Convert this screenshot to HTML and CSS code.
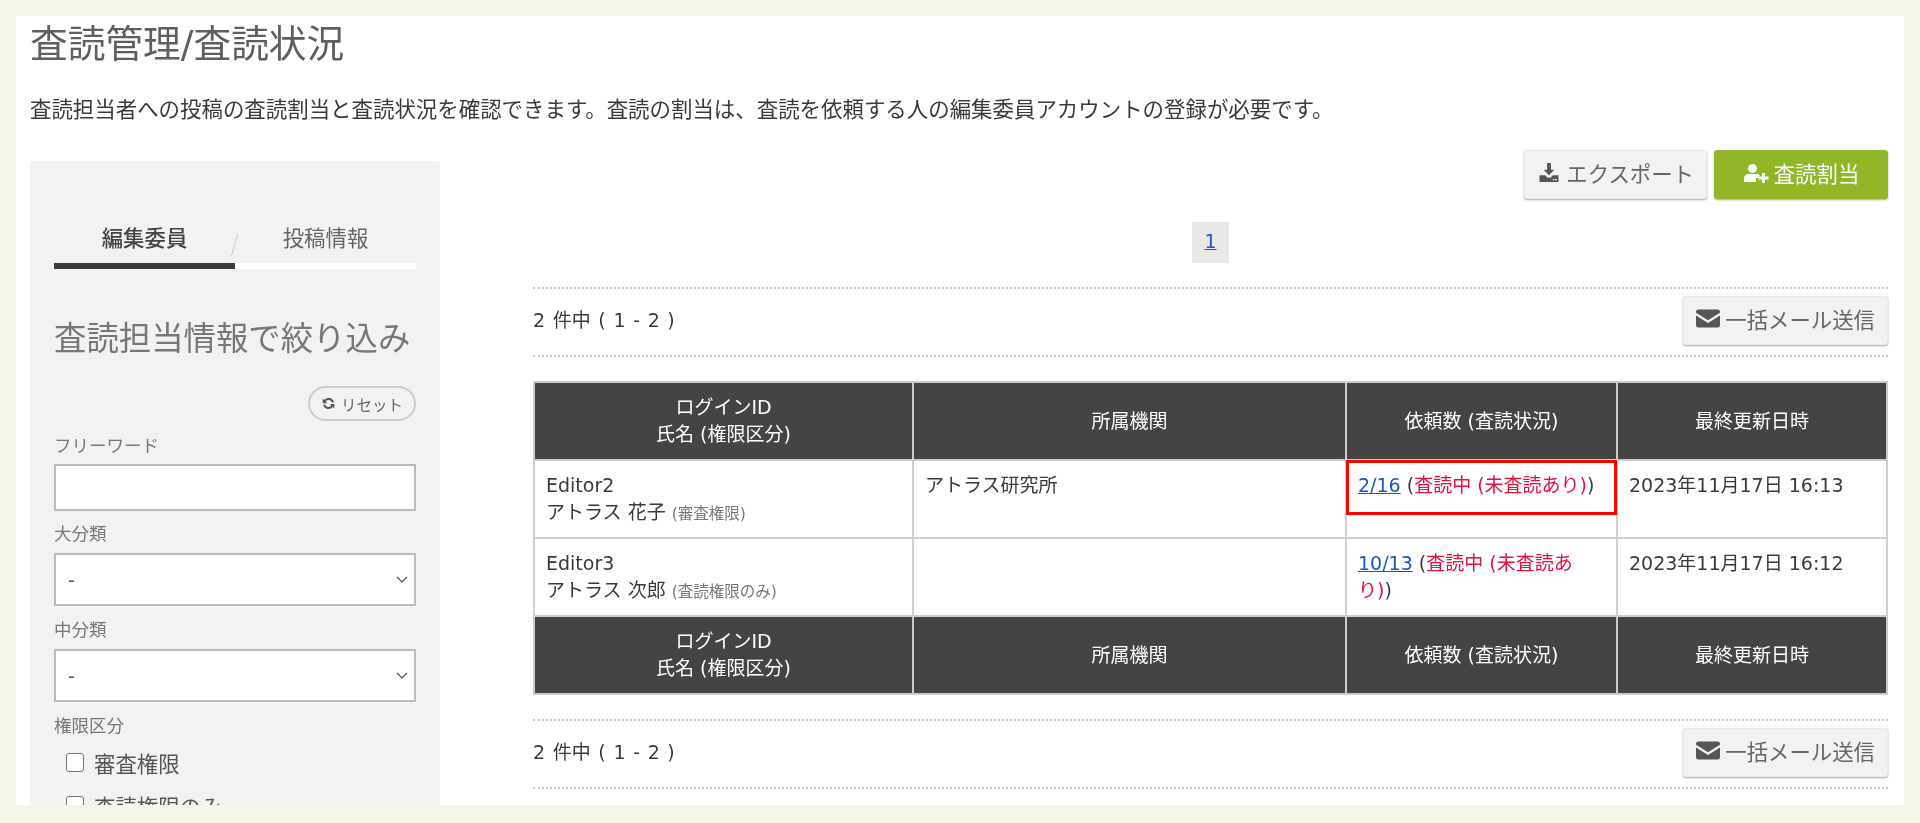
FILE: index.html
```html
<!DOCTYPE html>
<html lang="ja">
<head>
  <meta charset="UTF-8">
  <meta name="viewport" content="width=device-width, initial-scale=1.0">
  <title>査読管理/査読状況</title>
  <link rel="stylesheet" href="styles.css">
</head>
<body>
<div class="frame">
  <h1>査読管理/査読状況</h1>
  <p class="lead">査読担当者への投稿の査読割当と査読状況を確認できます。査読の割当は、査読を依頼する人の編集委員アカウントの登録が必要です。</p>

  <div class="columns">
    <aside class="sidebar">
      <div class="tabs">
        <div class="tab active">編集委員</div>
        <div class="tab">投稿情報</div>
      </div>
      <h2>査読担当情報で絞り込み</h2>
      <div class="reset-row">
        <button class="reset-btn">
          <svg class="icon-reset" viewBox="0 0 16 16"><path d="M13.800 6.600A6 6 0 0 0 3.400 4.200L1.800 2.600v5h5L5 5.800a3.700 3.700 0 0 1 6.500 1zM2.200 9.400a6 6 0 0 0 10.400 2.400l1.600 1.600v-5h-5l1.800 1.800a3.700 3.700 0 0 1-6.500-1z"/></svg>
          リセット
        </button>
      </div>
      <label class="field-label first">フリーワード</label>
      <input class="text-input" type="text">
      <label class="field-label">大分類</label>
      <select class="select-input"><option>-</option></select>
      <label class="field-label">中分類</label>
      <select class="select-input"><option>-</option></select>
      <label class="field-label">権限区分</label>
      <div class="check-list">
        <label class="check-row"><input type="checkbox"> 審査権限</label>
        <label class="check-row"><input type="checkbox"> 査読権限のみ</label>
      </div>
    </aside>

    <main class="main">
      <div class="toolbar">
        <button class="btn">
          <svg class="icon" viewBox="0 0 20 20"><path d="M8 0h4v7h3.500L10 13 4.500 7H8zM0 13h6l2.500 2.500h3L14 13h6v7H0zm14 3.800v1.400h1.800v-1.400zm2.600 0v1.400h1.800v-1.400z"/></svg>
          エクスポート
        </button>
        <button class="btn btn-green">
          <svg class="icon icon-user" viewBox="0 0 26 20"><path d="M9.500 1a4.500 4.500 0 1 1 0 9 4.500 4.500 0 0 1 0-9zM1 19v-3.500C1 12.500 3 11 5.500 11h8c1.500 0 2.500.5 3.300 1.300V15H13v4zM19 10h3v3.500h3.500v3H22V20h-3v-3.500h-3.500v-3H19z"/></svg>
          査読割当
        </button>
      </div>

      <div class="pager"><a href="#">1</a></div>

      <div class="result-bar">
        <span class="count">2 件中 ( 1 - 2 )</span>
        <button class="btn">
          <svg class="icon" viewBox="0 0 24 18"><path d="M2.500 0h19A2.500 2.500 0 0 1 24 2.500v.8l-12 7.500L0 3.300v-.8A2.500 2.500 0 0 1 2.500 0zM0 6l12 7.500L24 6v9.500a2.500 2.500 0 0 1-2.500 2.500h-19A2.500 2.500 0 0 1 0 15.500z"/></svg>
          一括メール送信
        </button>
      </div>

      <table class="list">
        <thead>
          <tr>
            <th>ログインID<br>氏名 (権限区分)</th>
            <th>所属機関</th>
            <th>依頼数 (査読状況)</th>
            <th>最終更新日時</th>
          </tr>
        </thead>
        <tbody>
          <tr>
            <td>Editor2<br>アトラス 花子 <small>(審査権限)</small></td>
            <td>アトラス研究所</td>
            <td class="marked"><span class="red-box"></span><a href="#">2/16</a> (<span class="status">査読中 (未査読あり)</span>)</td>
            <td>2023年11月17日 16:13</td>
          </tr>
          <tr>
            <td>Editor3<br>アトラス 次郎 <small>(査読権限のみ)</small></td>
            <td></td>
            <td><a href="#">10/13</a> (<span class="status">査読中 (未査読あり)</span>)</td>
            <td>2023年11月17日 16:12</td>
          </tr>
        </tbody>
        <tfoot>
          <tr>
            <th>ログインID<br>氏名 (権限区分)</th>
            <th>所属機関</th>
            <th>依頼数 (査読状況)</th>
            <th>最終更新日時</th>
          </tr>
        </tfoot>
      </table>

      <div class="result-bar">
        <span class="count">2 件中 ( 1 - 2 )</span>
        <button class="btn">
          <svg class="icon" viewBox="0 0 24 18"><path d="M2.500 0h19A2.500 2.500 0 0 1 24 2.500v.8l-12 7.500L0 3.300v-.8A2.500 2.500 0 0 1 2.500 0zM0 6l12 7.500L24 6v9.500a2.500 2.500 0 0 1-2.500 2.500h-19A2.500 2.500 0 0 1 0 15.500z"/></svg>
          一括メール送信
        </button>
      </div>
    </main>
  </div>
</div>
</body>
</html>
```

FILE: styles.css
```css
* {
  box-sizing: border-box;
}

html, body {
  height: 100%;
}

body {
  margin: 0;
  padding: 16px 16px 18px;
  overflow: hidden;
  background-color: #f3f8e6;
  font-family: "DejaVu Sans", "Noto Sans CJK JP", sans-serif;
  font-size: 19px;
  color: #3a3a3a;
}

.frame {
  height: 100%;
  padding: 0 16px 0 14px;
  overflow: hidden;
  background-color: #fff;
  filter: blur(0.5px);
}

h1 {
  margin: 0;
  font-size: 37.7px;
  font-weight: 400;
  line-height: 56px;
  color: #5f5f5f;
}

.lead {
  margin: 23px 0 25px;
  font-size: 21.45px;
  line-height: 30px;
}

.columns {
  display: flex;
  gap: 93px;
  align-items: flex-start;
}

/* left filter panel */
.sidebar {
  flex: 0 0 410px;
  margin-top: 11px;
  padding: 52px 24px 0;
  background-color: #f2f2f2;
  border-radius: 3px;
}

.tabs {
  display: flex;
  position: relative;
}

.tabs::after {
  content: "";
  position: absolute;
  left: 180px;
  top: 20px;
  width: 1px;
  height: 24px;
  background-color: #ccc;
  transform: rotate(16deg);
}

.tab {
  flex: 1;
  height: 56px;
  line-height: 52px;
  font-size: 21.4px;
  text-align: center;
  color: #666;
  border-bottom: 6px solid #fff;
}

.tab.active {
  font-weight: 500;
  color: #444;
  border-bottom-color: #3c3c3c;
}

h2 {
  margin: 48px 0 0;
  font-size: 32.4px;
  font-weight: 400;
  line-height: 44px;
  color: #777;
  white-space: nowrap;
}

.reset-row {
  display: flex;
  justify-content: flex-end;
  margin-top: 25px;
  margin-bottom: -1px;
}

.reset-btn {
  display: flex;
  align-items: center;
  justify-content: center;
  gap: 5px;
  width: 108px;
  height: 35px;
  padding: 0;
  font: inherit;
  font-size: 15.5px;
  color: #666;
  background-color: #f2f2f2;
  border: 2.5px solid #ccc;
  border-radius: 18px;
}

.icon-reset {
  width: 15px;
  height: 15px;
  fill: #555;
}

.field-label {
  display: block;
  margin: 11px 0 6px;
  font-size: 17.5px;
  line-height: 26px;
  color: #777;
}

.field-label.first {
  margin: 13px 0 5px;
}

.text-input, .select-input {
  display: block;
  width: 100%;
  font: inherit;
  color: #555;
  background-color: #fff;
  border: 2px solid #bbb;
  border-radius: 0;
}

.text-input {
  height: 47px;
  margin-bottom: -1px;
}

.select-input {
  height: 53px;
  padding: 0 12px;
  appearance: none;
  background-image: url("data:image/svg+xml,%3Csvg xmlns='http://www.w3.org/2000/svg' viewBox='0 0 12 8'%3E%3Cpath d='M1 1l5 5 5-5' fill='none' stroke='%23555' stroke-width='1.200'/%3E%3C/svg%3E");
  background-repeat: no-repeat;
  background-position: right 6px center;
  background-size: 12px 8px;
}

.check-list {
  margin-top: -4px;
}

.check-row {
  display: flex;
  align-items: center;
  gap: 10px;
  height: 43px;
  padding-left: 12px;
  font-size: 21.4px;
  color: #555;
}

.check-row input {
  width: 18px;
  height: 19px;
  margin: 0;
  appearance: none;
  background-color: #fff;
  border: 1.5px solid #777;
  border-radius: 3px;
}

/* right column */
.main {
  flex: 1;
  min-width: 0;
}

.toolbar {
  display: flex;
  justify-content: flex-end;
  gap: 7px;
}

.btn {
  display: inline-flex;
  align-items: center;
  justify-content: center;
  gap: 5px;
  height: 49px;
  padding: 0 12px 4px;
  font: inherit;
  font-size: 21.4px;
  color: #666;
  background-color: #f2f2f2;
  border: 1px solid #ebebeb;
  border-radius: 3px;
  box-shadow: 0 1px 2px rgba(0, 0, 0, 0.35);
}

.btn-green {
  width: 174px;
  color: #fff;
  background-color: #92b627;
  border-color: #92b627;
}

.icon {
  width: 24px;
  height: 19px;
  fill: #555;
}

.icon-user {
  width: 26px;
  height: 20px;
  fill: #fff;
}

.pager {
  display: flex;
  justify-content: center;
  margin-top: 23px;
}

.pager a {
  display: block;
  width: 37px;
  height: 41px;
  line-height: 38px;
  text-align: center;
  background-color: #e8e8e8;
}

a {
  color: #1a56c4;
}

.result-bar {
  display: flex;
  align-items: center;
  justify-content: space-between;
  height: 70px;
  margin-top: 24px;
  padding-bottom: 4px;
  border-top: 2px dotted #ccc;
  border-bottom: 2px dotted #ccc;
}

.count {
  margin-bottom: 3px;
  word-spacing: 1.6px;
}

table.list {
  width: 100%;
  margin-top: 24px;
  table-layout: fixed;
  border-collapse: collapse;
  line-height: 27px;
}

.list th, .list td {
  border: 2px solid #d0d0d0;
}

.list th {
  height: 78px;
  font-weight: 400;
  color: #fff;
  background-color: #444;
  border-color: #ccc;
}

.list td {
  height: 78px;
  padding: 11px 11px 7px;
  vertical-align: top;
}

.list th:nth-child(1) {
  width: 379px;
}

.list th:nth-child(2) {
  width: 433px;
}

.list th:nth-child(3) {
  width: 271px;
}

small {
  font-size: 15.5px;
  color: #777;
}

.status {
  color: #e0103f;
}

.marked {
  position: relative;
}

.red-box {
  position: absolute;
  left: -1px;
  top: -1px;
  right: -1px;
  height: 55px;
  border: 3px solid #f00;
}
```
